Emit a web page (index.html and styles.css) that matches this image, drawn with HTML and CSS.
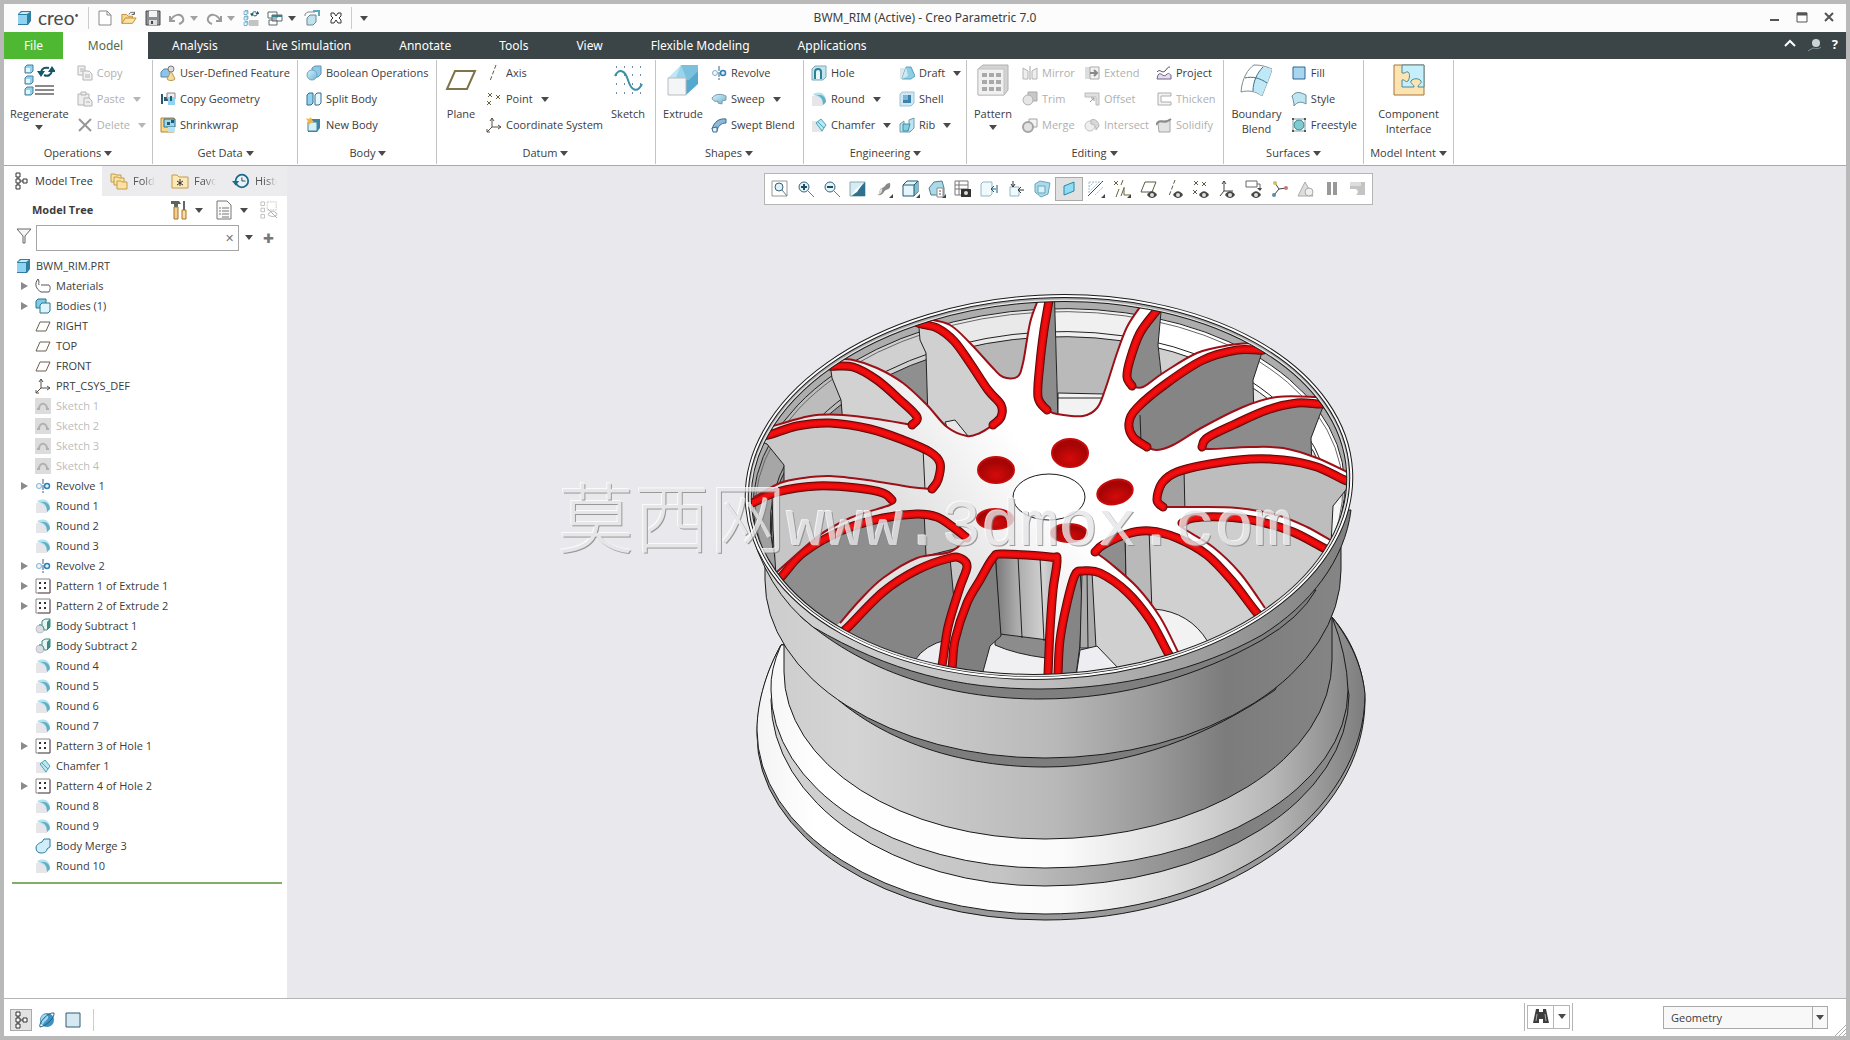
FILE: index.html
```html
<!DOCTYPE html>
<html lang="en">
<head>
<meta charset="utf-8">
<title>BWM_RIM (Active) - Creo Parametric 7.0</title>
<link rel="stylesheet" href="styles.css">
</head>
<body>
<svg class="defs" aria-hidden="true">
  <defs>
    <linearGradient id="gBlue" x1="0" y1="0" x2="1" y2="1"><stop offset="0" stop-color="#d8f1fb"/><stop offset="1" stop-color="#6fb6d3"/></linearGradient>
  </defs>
  <symbol id="cube" viewBox="0 0 16 16"><path d="M2 4l3-3h10v10l-3 4H2z" fill="#2f7fa3"/><path d="M2 5h9v9H2z" fill="#8fd3f0"/><path d="M3 4l3-2h8l-3 2z" fill="#c9edfb"/></symbol>
  <symbol id="new" viewBox="0 0 16 16"><path d="M2 1h8l4 4v10H2z" fill="#fff" stroke="#8a8a8a"/><path d="M10 1v4h4" fill="none" stroke="#8a8a8a"/></symbol>
  <symbol id="open" viewBox="0 0 18 16"><path d="M1 14V4h5l2 2h5v3" fill="#f7d78b" stroke="#b8862f"/><path d="M1 14l4-6h12l-4 6z" fill="#fbe3a4" stroke="#b8862f"/><path d="M9 4c1-3 5-3 6-1m0-2v3h-3" fill="none" stroke="#444"/></symbol>
  <symbol id="save" viewBox="0 0 16 16"><path d="M1 1h14v14H1z" fill="#8a8f94" stroke="#4a4a4a"/><path d="M4 1h8v6H4z" fill="#f3f3f3"/><path d="M4 10h8v5H4z" fill="#ddd"/><path d="M6 11h2v3H6z" fill="#444"/></symbol>
  <symbol id="undo" viewBox="0 0 16 16"><path d="M1 6v5h5M2 10c3-6 10-7 12-2 1 3-1 5-4 6" fill="none" stroke="#9b9b9b" stroke-width="2"/></symbol>
  <symbol id="redo" viewBox="0 0 16 16"><path d="M15 6v5h-5M14 10C11 4 4 3 2 8c-1 3 1 5 4 6" fill="none" stroke="#9b9b9b" stroke-width="2"/></symbol>
  <symbol id="regen" viewBox="0 0 32 32"><g fill="#8fd3f0" stroke="#4a7f96"><path d="M2 3l2-2h6v6l-2 2H2z"/><path d="M2 14l2-2h6v6l-2 2H2z"/><path d="M2 25l2-2h6v6l-2 2H2z"/></g><path d="M3 4h4v4H3zM3 15h4v4H3zM3 26h4v4H3z" fill="#e4f6fd"/><path d="M12 22h19M12 26h19M12 30h19" stroke="#8a8a8a" stroke-width="2"/><path d="M18 8c1-4 4-5 8-4M29 7c-1 4-4 6-8 4" fill="none" stroke="#175568" stroke-width="2"/><path d="M14 7h8l-4 6zM33 8h-8l4-6z" fill="#175568"/></symbol>
  <symbol id="wins" viewBox="0 0 16 16"><g fill="#fff" stroke="#5a6a70"><path d="M1 2h9v6H1zM5 5h10v6H5zM2 10h8v5H2z"/></g><path d="M5 5h10v2H5z" fill="#39808f"/></symbol>
  <symbol id="closewin" viewBox="0 0 16 16"><path d="M3 8l3-3h6v7l-3 3H3z" fill="#bfe3ee" stroke="#6b8791"/><path d="M1 6V4l3-2h7" fill="none" stroke="#8a8a8a"/><path d="M9 1h6v5" fill="none" stroke="#5aa7bf" stroke-width="2"/></symbol>
  <symbol id="xbox" viewBox="0 0 16 16"><path d="M3 3h3l2 3 2-3h3v3l-2 2 2 2v3h-3l-2-3-2 3H3v-3l2-2-2-2z" fill="#fff" stroke="#333"/></symbol>
  <symbol id="copy" viewBox="0 0 16 16"><g fill="#f2f2f2" stroke="#b4b4b4"><path d="M1 1h7v9H1z"/><path d="M6 6h6l3 3v6H6z"/></g><path d="M3 4h4M3 6h3M8 10h5M8 12h5" stroke="#b4b4b4"/></symbol>
  <symbol id="paste" viewBox="0 0 16 16"><g fill="#eee" stroke="#b4b4b4"><path d="M1 3h11v11H1z"/><path d="M4 1h5v3H4z"/><path d="M7 7h5l3 3v5H7z"/></g><path d="M9 11h4" stroke="#b4b4b4"/></symbol>
  <symbol id="del" viewBox="0 0 16 16"><path d="M2 2l12 12M14 2L2 14" stroke="#979797" stroke-width="2"/></symbol>
  <symbol id="udf" viewBox="0 0 16 16"><path d="M1 7l3-3h6v8H1z" fill="#8fc4e8" stroke="#4f87ad"/><circle cx="11" cy="4" r="3" fill="#ddd" stroke="#777"/><path d="M7 14l4-8 4 8c-2 2-6 2-8 0z" fill="#f6dc9a" stroke="#b99650"/></symbol>
  <symbol id="copygeo" viewBox="0 0 16 16"><path d="M1 3h2v10H1zM4 6h4v4H4z" fill="#2a5a70"/><path d="M7 2h8v6H7z" fill="#eee" stroke="#888"/><path d="M8 6h7v8H8z" fill="#8fd3f0"/><path d="M10 5h2v5h-2z" fill="#2a5a70"/></symbol>
  <symbol id="shrink" viewBox="0 0 16 16"><path d="M1 1h13v14H1z" fill="#f7d78b" stroke="#b8862f"/><path d="M4 2h11v8H4z" fill="#9ed7ee" stroke="#2e6f86"/><path d="M7 5h3v3H7zM11 3h3v3h-3z" fill="#235a70"/><path d="M8 10h7v5H8z" fill="#b5e2f2"/></symbol>
  <symbol id="bool" viewBox="0 0 16 16"><path d="M6 3l3-2h6v8l-3 3H6z" fill="#8fc9e8" stroke="#5b93b5"/><circle cx="6" cy="10" r="5" fill="url(#gBlue)" stroke="#6ba6c5"/></symbol>
  <symbol id="split" viewBox="0 0 16 16"><g fill="#8fd3f0" stroke="#2f6f8d"><path d="M1 4l2-2h4v10l-2 2H1z"/><path d="M9 4l2-2h4v10l-2 2H9z" fill="#e8f7fd"/></g></symbol>
  <symbol id="newbody" viewBox="0 0 16 16"><path d="M2 5l3-3h9v9l-3 4H2z" fill="#3f84a5"/><path d="M2 5h9v9H2z" fill="#d6f0fa" stroke="#3f84a5"/><path d="M0 1l3 1 2-2 1 3 2 2-3 1-2 2-1-3z" fill="#f3b63f"/></symbol>
  <symbol id="planeB" viewBox="0 0 32 32"><path d="M10 7h20l-8 18H2z" fill="none" stroke="#7d7448" stroke-width="2"/></symbol>
  <symbol id="plane" viewBox="0 0 16 16"><path d="M5 4h10l-4 9H1z" fill="none" stroke="#6b5f50"/></symbol>
  <symbol id="axis" viewBox="0 0 16 16"><path d="M10 0L4 16" stroke="#5f5b40" stroke-dasharray="4 2"/></symbol>
  <symbol id="point" viewBox="0 0 16 16"><path d="M2 2l4 4M6 2L2 6M10 4l4 4M14 4l-4 4M1 10l4 4M5 10l-4 4" stroke="#6b6336"/></symbol>
  <symbol id="csys" viewBox="0 0 16 16"><path d="M6 1v9h9M6 10l-5 5M4 4l2-3 2 3M12 8l3 2-3 2M1 12v3h3" fill="none" stroke="#5b5148"/></symbol>
  <symbol id="sketchB" viewBox="0 0 32 32"><path d="M4 3h26M4 11h26M4 20h26M4 29h26" stroke="#6b8ea8" stroke-dasharray="1 7" stroke-width="2"/><path d="M3 12C7 4 13 6 16 16s9 14 14 4" fill="none" stroke="#3f8fa8" stroke-width="2"/></symbol>
  <symbol id="extrudeB" viewBox="0 0 32 32"><path d="M1 14L14 1h17L19 14z" fill="#bfe6f5"/><path d="M14 1h17v19L19 31V14z" fill="#55a9cc"/><path d="M14 1h17v6L22 16H8z" fill="#8ccce6" opacity=".7"/><path d="M1 14h18v17H1z" fill="#f4f5f7" stroke="#b9bcc0"/></symbol>
  <symbol id="revolve" viewBox="0 0 16 16"><circle cx="12" cy="8" r="2.500" fill="#dff0fb" stroke="#2d7fb8" stroke-width="1.500"/><circle cx="4" cy="8" r="2.500" fill="#eef7fc" stroke="#7fb0d0"/><path d="M8 1v14" stroke="#3f5f78" stroke-dasharray="5 1"/></symbol>
  <symbol id="sweep" viewBox="0 0 16 16"><path d="M1 7c4-5 10-4 14-2v4l-4 1v3L7 12v-2c-3 1-5 0-6-3z" fill="url(#gBlue)" stroke="#7a98a8"/></symbol>
  <symbol id="swept" viewBox="0 0 16 16"><path d="M1 12C3 5 8 1 15 2v4C10 6 7 9 6 14z" fill="#8fb9d8" stroke="#3d6d92"/><path d="M1 11l5-1v5H2z" fill="#e8f4fb" stroke="#3d6d92"/></symbol>
  <symbol id="hole" viewBox="0 0 16 16"><path d="M1 4l3-3h11v11l-3 3H1z" fill="#c3e4ef" stroke="#7fa9b8"/><path d="M4 14V7c0-4 6-4 6 0v7" fill="#e9f7fb" stroke="#2f7f93" stroke-width="2"/></symbol>
  <symbol id="round" viewBox="0 0 16 16"><path d="M1 5h7l4 4v6H1z" fill="#e6e6ea"/><path d="M2 4c2-3 7-3 10-1 3 3 3 5 3 8l-3 3c0-6-3-8-10-10z" fill="#b4e1ec"/><path d="M5 4c5 1 7 4 7 10l3-3c0-4-3-7-6-7z" fill="#62b0c6"/></symbol>
  <symbol id="chamfer" viewBox="0 0 16 16"><path d="M1 4h7l4 5v6H1z" fill="#e6e6ea"/><path d="M5 6l5-4 5 6-4 6z" fill="#b9e8f0" stroke="#4aa3b8"/><path d="M7 5l6 6" stroke="#4aa3b8"/></symbol>
  <symbol id="draft" viewBox="0 0 16 16"><path d="M1 3h6l-3 11H1z" fill="#dfe6ea"/><path d="M7 2h5l4 9-4 3H3z" fill="#8fcde2" stroke="#5aa0b8"/><path d="M7 2l2 9-6 3z" fill="#c9eaf4"/></symbol>
  <symbol id="shell" viewBox="0 0 16 16"><path d="M1 3l2-2h12v11l-3 3H1z" fill="#cfe7f3" stroke="#9cc3d8"/><path d="M4 4h8v8H4z" fill="#3f81ab"/><path d="M4 4h5v5H4z" fill="#7db6d6"/></symbol>
  <symbol id="rib" viewBox="0 0 16 16"><path d="M1 15V7l4-3v5h5V3l5-2v10l-4 4z" fill="#bfe3ee" stroke="#6a9fb2"/><path d="M4 7h7l-2 7H4z" fill="#86cfe0" stroke="#3f8ea5"/></symbol>
  <symbol id="patternB" viewBox="0 0 32 32"><path d="M1 5l5-4h25v25l-4 5H1z" fill="#d3d3d3" stroke="#b1b1b1"/><path d="M1 5h26v26H1z" fill="#f0f0f0" stroke="#c2c2c2"/><path d="M5 9h5v4H5zM12 9h5v4h-5zM19 9h5v4h-5zM5 16h5v4H5zM12 16h5v4h-5zM19 16h5v4h-5zM5 23h5v4H5zM12 23h5v4h-5zM19 23h5v4h-5z" fill="#a9a9a9"/></symbol>
  <symbol id="mirror" viewBox="0 0 16 16"><path d="M1 3l5 3v8H1zM15 3l-5 3v8h5z" fill="#eee" stroke="#b4b4b4"/><path d="M8 1v14" stroke="#a5a5a5"/></symbol>
  <symbol id="trim" viewBox="0 0 16 16"><path d="M6 1h9v9H6z" fill="#c8c8c8" stroke="#a9a9a9"/><circle cx="6" cy="9" r="5" fill="#e6e6e6" stroke="#b0b0b0"/></symbol>
  <symbol id="merge" viewBox="0 0 16 16"><path d="M7 2h8v8H7z" fill="#f4f4f4" stroke="#a4a4a4"/><circle cx="6" cy="10" r="5" fill="#e2e2e2" stroke="#a4a4a4" stroke-width="2"/></symbol>
  <symbol id="extend" viewBox="0 0 16 16"><path d="M1 2h5v12H1z" fill="#ddd"/><path d="M6 2h9v12H6z" fill="#f2f2f2" stroke="#aaa"/><path d="M6 8h6M10 5l3 3-3 3" fill="none" stroke="#888" stroke-width="2"/></symbol>
  <symbol id="offset" viewBox="0 0 16 16"><path d="M1 2h14v12h-3V6H1z" fill="#e0e0e0" stroke="#bbb"/><path d="M6 11l4-4M7 7h3v3" stroke="#999" fill="none"/></symbol>
  <symbol id="intersect" viewBox="0 0 16 16"><circle cx="6" cy="9" r="5" fill="#eee" stroke="#c2c2c2"/><path d="M7 3c5-2 8 3 8 6l-3 4c0-4-2-6-5-6z" fill="#d8d8d8" stroke="#b5b5b5"/></symbol>
  <symbol id="project" viewBox="0 0 16 16"><path d="M2 10c3-4 5 3 8 0s3-1 5 0v4H1z" fill="#e4dfec" stroke="#75618c"/><path d="M1 7c3-4 5 2 8-1s2-4 5-4" fill="none" stroke="#555"/></symbol>
  <symbol id="thicken" viewBox="0 0 16 16"><path d="M15 2H2v12h13v-3H5V5h10z" fill="#f3f3f3" stroke="#adadad"/></symbol>
  <symbol id="solidify" viewBox="0 0 16 16"><path d="M2 6c4-4 6 3 12-3v12H3z" fill="#e3e3e3" stroke="#a5a5a5"/><path d="M0 8c4-8 7 0 15-6" fill="none" stroke="#8b8b8b" stroke-width="2"/></symbol>
  <symbol id="boundB" viewBox="0 0 32 32"><path d="M1 28C2 14 8 5 14 1c8 0 13 2 18 4-2 8-6 16-10 27C16 27 8 26 1 28z" fill="#fff" stroke="#7c8b92"/><path d="M23 3l9 2c-2 8-6 16-10 27-3-3-6-4-9-5 0-9 4-17 10-24z" fill="#bfe9f7"/><path d="M13 27C13 18 17 9 23 3M5 14c7-2 15 0 22 5" fill="none" stroke="#3f7285"/></symbol>
  <symbol id="fill" viewBox="0 0 16 16"><path d="M2 2h12v12H2z" fill="#a8d6f0" stroke="#2f6792"/></symbol>
  <symbol id="style" viewBox="0 0 16 16"><path d="M1 5c4-5 8-4 14-1v9c-5-3-9-2-12 2C3 11 2 8 1 5z" fill="#bfe6f0" stroke="#6b8e98"/></symbol>
  <symbol id="free" viewBox="0 0 16 16"><circle cx="8" cy="8" r="5" fill="#7fcbd2" stroke="#38828a"/><path d="M2 2h12v12H2z" fill="none" stroke="#8c9a9e"/><path d="M1 1h2v2H1zM13 1h2v2h-2zM1 13h2v2H1zM13 13h2v2h-2z" fill="#4b5a60"/></symbol>
  <symbol id="compB" viewBox="0 0 32 32"><path d="M1 1h30v30H1z" fill="#fbe4b2" stroke="#a8743a"/><path d="M9 1h22v22h-6c0-3 4-3 3-6-2-3-8-3-10 0-1 3 3 3 3 6H9v-7c3-1 3 3 6 1 2-3 2-8 0-9-2-1-3 2-6 1z" fill="#c5f0fb" stroke="#4e8797"/></symbol>
  <symbol id="treeic" viewBox="0 0 16 18"><path d="M3 1h4v4H3zM3 7h4v4H3zM3 13h4v4H3zM10 7h4v4h-4z" fill="#fff" stroke="#333"/><path d="M5 5v2M5 11v2M7 9h3" stroke="#333"/></symbol>
  <symbol id="folders" viewBox="0 0 18 18"><g fill="#fbe3a4" stroke="#c79a4b"><path d="M1 2h4l1 1h5v7H1z"/><path d="M4 5h4l1 1h5v7H4z"/><path d="M7 9h4l1 1h5v7H7z"/></g></symbol>
  <symbol id="fav" viewBox="0 0 18 18"><path d="M1 3h5l2 2h9v11H1z" fill="#fbe9b8" stroke="#c79a4b"/><path d="M9 7v7M6 9l6 4M12 9l-6 4" stroke="#333"/></symbol>
  <symbol id="hist" viewBox="0 0 20 18"><circle cx="11" cy="9" r="7" fill="#e7f3f8" stroke="#1c6a8d" stroke-width="2"/><path d="M11 5v4h4" fill="none" stroke="#333"/><path d="M0 9h8L4 14z" fill="#1c6a8d"/></symbol>
  <symbol id="tools" viewBox="0 0 16 20"><path d="M0 1h8l2 3H7v3H3V4H0z" fill="#5f6265"/><path d="M3 7h4v12H3z" fill="#f3cd8e" stroke="#a87424"/><path d="M12 1h2v9h-2z" fill="#666"/><path d="M11 10h4v9h-4z" fill="#f6dca8" stroke="#a87424"/></symbol>
  <symbol id="list" viewBox="0 0 16 20"><path d="M1 1h10l4 4v14H1z" fill="#fafafa" stroke="#777"/><path d="M3 8h2M3 11h2M3 14h2M6 8h7M6 11h7M6 14h7M6 17h7" stroke="#777"/></symbol>
  <symbol id="hidet" viewBox="0 0 20 20"><path d="M1 1h4v4H1zM1 8h4v4H1zM1 15h4v4H1z" fill="none" stroke="#bdbdbd"/><path d="M8 1h10v9H8z" fill="none" stroke="#c5c5c5" stroke-dasharray="2 1"/><path d="M9 15c3-5 7-5 10 0-3 3-7 3-10 0zM9 9l10 10" fill="none" stroke="#aaa"/></symbol>
  <symbol id="funnel" viewBox="0 0 16 16"><path d="M1 1h14L9 8v7H7V8z" fill="#f6f6f6" stroke="#666"/></symbol>
  <symbol id="mats" viewBox="0 0 16 16"><path d="M3 1c-4 5-2 10 3 13M3 1c2 3 0 4 1 6M6 7h8c2 2 1 5 0 7H6" fill="none" stroke="#555"/></symbol>
  <symbol id="bodies" viewBox="0 0 16 16"><path d="M1 3l2-2h8v9H1z" fill="#7fcbe6" stroke="#2c7390"/><path d="M5 7l2-2h8v8l-2 2H5z" fill="#dff4fb" stroke="#2c7390"/></symbol>
  <symbol id="sk" viewBox="0 0 16 16"><path d="M0 0h16v16H0z" fill="#dcdcdc"/><path d="M2 11h2c0-7 8-7 8 0h2" fill="none" stroke="#b0b0b0" stroke-width="2"/></symbol>
  <symbol id="pat" viewBox="0 0 16 16"><path d="M1 1h14v14H1z" fill="#fff" stroke="#8a8585"/><path d="M15 2v13H3" fill="none" stroke="#75606a"/><path d="M4 4h2v2H4zM9 4h2v2H9zM4 9h2v2H4zM9 9h2v2H9z" fill="#333"/></symbol>
  <symbol id="bsub" viewBox="0 0 16 16"><path d="M7 3l3-2h5v8l-3 3H7z" fill="#e5f5f3" stroke="#3c8a80"/><path d="M12 4l3-3v8l-3 3z" fill="#3c8a80"/><circle cx="5" cy="11" r="4" fill="#dcdce2" stroke="#c2c2ca"/><path d="M4 7c3-1 5 2 5 5" fill="none" stroke="#3c8a80"/></symbol>
  <symbol id="bmerge" viewBox="0 0 16 16"><path d="M7 4l2-3h6v8l-3 2c0 3-3 4-6 4s-5-2-5-5 3-5 6-6z" fill="#cfeef7" stroke="#2a7ba0"/></symbol>
  <symbol id="zfit" viewBox="0 0 18 18"><path d="M1 1h15v15H1z" fill="#fff" stroke="#999"/><circle cx="8" cy="7" r="4" fill="#dff1f8" stroke="#3a5f70"/><path d="M11 10l5 6" stroke="#5a7f90"/></symbol>
  <symbol id="zin" viewBox="0 0 18 18"><circle cx="7" cy="7" r="5" fill="#e4f3f8" stroke="#3a6478"/><path d="M11 11l6 6" stroke="#777"/><path d="M4 7h6M7 4v6" stroke="#17506b" stroke-width="2"/></symbol>
  <symbol id="zout" viewBox="0 0 18 18"><circle cx="7" cy="7" r="5" fill="#e4f3f8" stroke="#3a6478"/><path d="M11 11l6 6" stroke="#777"/><path d="M4 7h6" stroke="#17506b" stroke-width="2"/></symbol>
  <symbol id="repaint" viewBox="0 0 18 18"><path d="M1 2h15v14H1z" fill="#d3ecf6" stroke="#8aa"/><path d="M16 2v14H3z" fill="#2f708f"/><path d="M3 15l3-5 8-7-6 9z" fill="#fff"/></symbol>
  <symbol id="render" viewBox="0 0 18 18"><path d="M2 15c4 0 1-6 5-7s3-5 8-5c1 5-1 6-4 7s-2 6-9 5z" fill="#888"/><path d="M2 15c4 0 1-6 5-7 1 3-1 7-5 7z" fill="#ddd"/><path d="M18 14v4h-4z" fill="#444"/></symbol>
  <symbol id="disp" viewBox="0 0 18 18"><path d="M1 5l4-4h11v11l-4 4H1z" fill="#e4f6fb" stroke="#1f5a70"/><path d="M12 5l4-4v11l-4 4z" fill="#7fbcd2"/><path d="M1 5h11v11M12 5l4-4" fill="none" stroke="#1f5a70"/><path d="M18 14v4h-4z" fill="#444"/></symbol>
  <symbol id="orient" viewBox="0 0 18 18"><path d="M1 8l5-6 8-1 2 7v7H3z" fill="#a9dbea" stroke="#5a7a88"/><path d="M9 8h6v9H9z" fill="#fff" stroke="#888"/><path d="M11 11h2M11 14h2" stroke="#555"/><path d="M18 14v4h-4z" fill="#444"/></symbol>
  <symbol id="views" viewBox="0 0 18 18"><path d="M1 1h13v14H1zM1 5h13M1 9h13M5 1v14" fill="#fff" stroke="#777"/><path d="M7 9h10v8H7z" fill="#333"/><circle cx="12" cy="13" r="2" fill="#ddd"/></symbol>
  <symbol id="sect" viewBox="0 0 18 18"><path d="M1 4l2-2h9v12l-2 2H1z" fill="#f0f9fc" stroke="#8fb9c8"/><path d="M17 5v8M11 9h5M14 6l-3 3 3 3" fill="none" stroke="#1f5a70"/></symbol>
  <symbol id="sect2" viewBox="0 0 18 18"><path d="M3 7h9v9H3z" fill="#f0f9fc" stroke="#8fb9c8"/><path d="M6 1v6M4 4l2 3 2-3M17 10h-5M14 7l-3 3 3 3" fill="none" stroke="#333"/></symbol>
  <symbol id="persp" viewBox="0 0 18 18"><path d="M2 4l5-3 10 2-2 11-7 3-6-5z" fill="#a9dbea" stroke="#6aa5ba"/><path d="M5 6h7v7H5z" fill="#d8f0f8" stroke="#6aa5ba"/></symbol>
  <symbol id="planes3" viewBox="0 0 18 18"><path d="M4 6l10-4v9L4 15z" fill="#8fdcf5" stroke="#2a87a8"/></symbol>
  <symbol id="hatch" viewBox="0 0 18 18"><path d="M1 16L16 1" stroke="#444"/><path d="M2 2h13M2 2v12M2 7l5-5M2 12L12 2M8 15l8-8" stroke="#9fc3cf" fill="none" stroke-dasharray="2 1"/><path d="M18 14v4h-4z" fill="#444"/></symbol>
  <symbol id="datums" viewBox="0 0 18 18"><path d="M1 1l4 4M5 1L1 5M10 0L8 5M6 9l-3 8M11 7v8h6M11 8l-3 8" stroke="#6b6336" fill="none"/><path d="M18 14v4h-4z" fill="#444"/></symbol>
  <symbol id="eye" viewBox="0 0 10 7"><path d="M0 4c3-5 7-5 10 0-3 4-7 4-10 0z" fill="#444"/><circle cx="5" cy="4" r="2" fill="#ddd"/></symbol>
  <symbol id="dplane" viewBox="0 0 18 18"><path d="M5 2h11l-4 10H1z" fill="none" stroke="#5f5b40"/><use href="#eye" x="7" y="11" width="10" height="7"/></symbol>
  <symbol id="daxis" viewBox="0 0 18 18"><path d="M9 0L3 16" stroke="#5f5b40" stroke-dasharray="4 2"/><use href="#eye" x="7" y="11" width="10" height="7"/></symbol>
  <symbol id="dpoint" viewBox="0 0 18 18"><path d="M2 1l4 4M6 1L2 5M10 2l4 4M14 2l-4 4M1 10l4 4M5 10l-4 4" stroke="#5f5b40"/><use href="#eye" x="7" y="11" width="10" height="7"/></symbol>
  <symbol id="dcsys" viewBox="0 0 18 18"><path d="M6 1v10h9M6 11l-4 5M4 4l2-3 2 3" fill="none" stroke="#444"/><use href="#eye" x="7" y="11" width="10" height="7"/></symbol>
  <symbol id="dnote" viewBox="0 0 18 18"><path d="M1 1h11v6H1zM12 4h3v5" fill="#fff" stroke="#666"/><path d="M12 8l3 3 2-3z" fill="#444"/><use href="#eye" x="6" y="11" width="10" height="7"/></symbol>
  <symbol id="spin" viewBox="0 0 18 18"><path d="M4 3l4 6 7-1M8 9l-5 6" stroke="#444" fill="none"/><circle cx="4" cy="3" r="2" fill="#c9c26a"/><circle cx="15" cy="8" r="2" fill="#c77"/><circle cx="3" cy="15" r="2" fill="#588fa3"/></symbol>
  <symbol id="simg" viewBox="0 0 18 18"><path d="M8 2l8 14H1z" fill="#ddd" stroke="#aaa"/><circle cx="12" cy="12" r="4" fill="#eee" stroke="#aaa"/></symbol>
  <symbol id="pause" viewBox="0 0 18 18"><path d="M4 2h4v13H4zM10 2h4v13h-4z" fill="#999"/></symbol>
  <symbol id="stop" viewBox="0 0 18 18"><path d="M1 2h15v13H7c3-2 2-6-1-6H1z" fill="#c4c4c4"/><path d="M1 2h11v4H1z" fill="#ddd"/></symbol>
  <symbol id="globe" viewBox="0 0 18 18"><circle cx="9" cy="9" r="7" fill="#3a93c4"/><path d="M5 4c3-2 6 0 5 3s-4 3-5 7c-3-3-3-8 0-10z" fill="#9fd6ef"/><path d="M2 16C0 12 10 1 16 2c1 4-7 13-14 14z" fill="none" stroke="#2c5c77"/></symbol>
  <symbol id="pane" viewBox="0 0 18 18"><path d="M2 2h14v14H2z" fill="#d5e9f2" stroke="#335a70"/></symbol>
  <symbol id="bino" viewBox="0 0 18 18"><path d="M4 1h3v3h4V1h3l3 14h-6v-4H7v4H1z" fill="#3c3c3c"/><path d="M5 6l-1 7M13 6l1 7" stroke="#aaa"/></symbol>
</svg>

<header class="title-bar">
  <div class="quick">
    <svg class="i16"><use href="#cube"/></svg><span class="brand">creo<sup>•</sup></span><span class="vsep"></span>
    <button aria-label="New"><svg class="i16"><use href="#new"/></svg></button>
    <button aria-label="Open"><svg class="i16"><use href="#open"/></svg></button>
    <button aria-label="Save"><svg class="i16"><use href="#save"/></svg></button>
    <button aria-label="Undo" class="drop off"><svg class="i16"><use href="#undo"/></svg></button>
    <button aria-label="Redo" class="drop off"><svg class="i16"><use href="#redo"/></svg></button>
    <button aria-label="Regenerate"><svg class="i16"><use href="#regen"/></svg></button>
    <button aria-label="Windows" class="drop"><svg class="i16"><use href="#wins"/></svg></button>
    <button aria-label="Activate"><svg class="i16"><use href="#closewin"/></svg></button>
    <button aria-label="Close"><svg class="i16"><use href="#xbox"/></svg></button>
    <button aria-label="Customize" class="drop custom"></button>
  </div>
  <h1>BWM_RIM (Active) - Creo Parametric 7.0</h1>
  <div class="win">
    <button aria-label="Minimize"><svg class="i12" viewBox="0 0 12 12"><path d="M1 8h9" stroke="#555" stroke-width="2"/></svg></button>
    <button aria-label="Restore"><svg class="i12" viewBox="0 0 12 12"><path d="M1 1h10v9H1z" fill="#fff" stroke="#555"/><path d="M1 2h10" stroke="#555" stroke-width="3"/></svg></button>
    <button aria-label="Close window"><svg class="i12" viewBox="0 0 12 12"><path d="M2 1l8 8M10 1L2 9" stroke="#555" stroke-width="2"/></svg></button>
  </div>
</header>

<nav class="tabs">
  <a href="#file" class="file">File</a><a href="#model" class="on">Model</a>
  <a href="#analysis">Analysis</a><a href="#live">Live Simulation</a><a href="#annotate">Annotate</a><a href="#tools">Tools</a><a href="#view">View</a><a href="#flex">Flexible Modeling</a><a href="#apps">Applications</a>
  <div class="help">
    <button aria-label="Collapse ribbon"><svg class="i12" viewBox="0 0 12 12"><path d="M1 8l5-5 5 5" fill="none" stroke="#fff" stroke-width="2"/></svg></button>
    <button aria-label="Search"><svg class="i16" viewBox="0 0 16 16"><circle cx="10" cy="7" r="4" fill="#c9d6d9"/><path d="M2 15l5-3c3 1 6 1 8-1" fill="none" stroke="#7d9298" stroke-width="1"/></svg></button>
    <button aria-label="Help" class="q">?</button>
  </div>
</nav>

<section class="ribbon" aria-label="Ribbon">
  <div class="group g-ops"><div class="tools">
    <button class="big drop"><svg><use href="#regen"/></svg><span>Regenerate</span></button>
    <div class="col"><button disabled><svg><use href="#copy"/></svg>Copy</button><button class="drop" disabled><svg><use href="#paste"/></svg>Paste</button><button class="drop" disabled><svg><use href="#del"/></svg>Delete</button></div>
  </div><button class="name drop">Operations</button></div>
  <div class="group g-get"><div class="tools">
    <div class="col"><button><svg><use href="#udf"/></svg>User-Defined Feature</button><button><svg><use href="#copygeo"/></svg>Copy Geometry</button><button><svg><use href="#shrink"/></svg>Shrinkwrap</button></div>
  </div><button class="name drop">Get Data</button></div>
  <div class="group g-body"><div class="tools">
    <div class="col"><button><svg><use href="#bool"/></svg>Boolean Operations</button><button><svg><use href="#split"/></svg>Split Body</button><button><svg><use href="#newbody"/></svg>New Body</button></div>
  </div><button class="name drop">Body</button></div>
  <div class="group g-datum"><div class="tools">
    <button class="big"><svg><use href="#planeB"/></svg><span>Plane</span></button>
    <div class="col"><button><svg><use href="#axis"/></svg>Axis</button><button class="drop"><svg><use href="#point"/></svg>Point</button><button><svg><use href="#csys"/></svg>Coordinate System</button></div>
    <button class="big"><svg><use href="#sketchB"/></svg><span>Sketch</span></button>
  </div><button class="name drop">Datum</button></div>
  <div class="group g-shapes"><div class="tools">
    <button class="big"><svg><use href="#extrudeB"/></svg><span>Extrude</span></button>
    <div class="col"><button><svg><use href="#revolve"/></svg>Revolve</button><button class="drop"><svg><use href="#sweep"/></svg>Sweep</button><button><svg><use href="#swept"/></svg>Swept Blend</button></div>
  </div><button class="name drop">Shapes</button></div>
  <div class="group g-eng"><div class="tools">
    <div class="col"><button><svg><use href="#hole"/></svg>Hole</button><button class="drop"><svg><use href="#round"/></svg>Round</button><button class="drop"><svg><use href="#chamfer"/></svg>Chamfer</button></div>
    <div class="col"><button class="drop"><svg><use href="#draft"/></svg>Draft</button><button><svg><use href="#shell"/></svg>Shell</button><button class="drop"><svg><use href="#rib"/></svg>Rib</button></div>
  </div><button class="name drop">Engineering</button></div>
  <div class="group g-edit"><div class="tools">
    <button class="big drop"><svg><use href="#patternB"/></svg><span>Pattern</span></button>
    <div class="col"><button disabled><svg><use href="#mirror"/></svg>Mirror</button><button disabled><svg><use href="#trim"/></svg>Trim</button><button disabled><svg><use href="#merge"/></svg>Merge</button></div>
    <div class="col"><button disabled><svg><use href="#extend"/></svg>Extend</button><button disabled><svg><use href="#offset"/></svg>Offset</button><button disabled><svg><use href="#intersect"/></svg>Intersect</button></div>
    <div class="col"><button><svg><use href="#project"/></svg>Project</button><button disabled><svg><use href="#thicken"/></svg>Thicken</button><button disabled><svg><use href="#solidify"/></svg>Solidify</button></div>
  </div><button class="name drop">Editing</button></div>
  <div class="group g-surf"><div class="tools">
    <button class="big"><svg><use href="#boundB"/></svg><span>Boundary<br>Blend</span></button>
    <div class="col"><button><svg><use href="#fill"/></svg>Fill</button><button><svg><use href="#style"/></svg>Style</button><button><svg><use href="#free"/></svg>Freestyle</button></div>
  </div><button class="name drop">Surfaces</button></div>
  <div class="group g-intent"><div class="tools">
    <button class="big"><svg><use href="#compB"/></svg><span>Component<br>Interface</span></button>
  </div><button class="name drop">Model Intent</button></div>
</section>

<main class="work">
  <aside class="panel">
    <div class="ptabs">
      <button class="on"><svg><use href="#treeic"/></svg>Model Tree</button>
      <button><svg><use href="#folders"/></svg><span>Folder</span></button>
      <button><svg><use href="#fav"/></svg><span>Favorites</span></button>
      <button><svg><use href="#hist"/></svg><span>History</span></button>
    </div>
    <div class="phead"><h2>Model Tree</h2>
      <button class="drop" aria-label="Settings"><svg><use href="#tools"/></svg></button>
      <button class="drop" aria-label="Show"><svg><use href="#list"/></svg></button>
      <button aria-label="Hide columns"><svg><use href="#hidet"/></svg></button>
    </div>
    <div class="search">
      <label for="filter" aria-label="Filter tree"><svg class="i16"><use href="#funnel"/></svg></label>
      <div class="field"><input id="filter" type="text"><button aria-label="Clear">✕</button></div>
      <button class="drop" aria-label="Filter options"></button>
      <button class="plus" aria-label="Add">✚</button>
    </div>
    <ul class="tree">
      <li class="root"><svg><use href="#cube"/></svg>BWM_RIM.PRT</li>
      <li class="exp"><button aria-label="Expand"></button><svg><use href="#mats"/></svg>Materials</li>
      <li class="exp"><button aria-label="Expand"></button><svg><use href="#bodies"/></svg>Bodies (1)</li>
      <li><svg><use href="#plane"/></svg>RIGHT</li>
      <li><svg><use href="#plane"/></svg>TOP</li>
      <li><svg><use href="#plane"/></svg>FRONT</li>
      <li><svg><use href="#csys"/></svg>PRT_CSYS_DEF</li>
      <li class="dim"><svg><use href="#sk"/></svg>Sketch 1</li>
      <li class="dim"><svg><use href="#sk"/></svg>Sketch 2</li>
      <li class="dim"><svg><use href="#sk"/></svg>Sketch 3</li>
      <li class="dim"><svg><use href="#sk"/></svg>Sketch 4</li>
      <li class="exp"><button aria-label="Expand"></button><svg><use href="#revolve"/></svg>Revolve 1</li>
      <li><svg><use href="#round"/></svg>Round 1</li>
      <li><svg><use href="#round"/></svg>Round 2</li>
      <li><svg><use href="#round"/></svg>Round 3</li>
      <li class="exp"><button aria-label="Expand"></button><svg><use href="#revolve"/></svg>Revolve 2</li>
      <li class="exp"><button aria-label="Expand"></button><svg><use href="#pat"/></svg>Pattern 1 of Extrude 1</li>
      <li class="exp"><button aria-label="Expand"></button><svg><use href="#pat"/></svg>Pattern 2 of Extrude 2</li>
      <li><svg><use href="#bsub"/></svg>Body Subtract 1</li>
      <li><svg><use href="#bsub"/></svg>Body Subtract 2</li>
      <li><svg><use href="#round"/></svg>Round 4</li>
      <li><svg><use href="#round"/></svg>Round 5</li>
      <li><svg><use href="#round"/></svg>Round 6</li>
      <li><svg><use href="#round"/></svg>Round 7</li>
      <li class="exp"><button aria-label="Expand"></button><svg><use href="#pat"/></svg>Pattern 3 of Hole 1</li>
      <li><svg><use href="#chamfer"/></svg>Chamfer 1</li>
      <li class="exp"><button aria-label="Expand"></button><svg><use href="#pat"/></svg>Pattern 4 of Hole 2</li>
      <li><svg><use href="#round"/></svg>Round 8</li>
      <li><svg><use href="#round"/></svg>Round 9</li>
      <li><svg><use href="#bmerge"/></svg>Body Merge 3</li>
      <li><svg><use href="#round"/></svg>Round 10</li>
    </ul>
  </aside>

  <section class="viewport" aria-label="Graphics">
    <svg class="scene" viewBox="287 166 1559 832" role="img" aria-label="Wheel rim model">
      <defs>
        <linearGradient id="wall" gradientUnits="userSpaceOnUse" x1="765" y1="0" x2="1341" y2="0"><stop offset="0" stop-color="#cdcdcd"/><stop offset=".15" stop-color="#d4d4d4"/><stop offset=".5" stop-color="#b9b9b9"/><stop offset=".66" stop-color="#9c9c9c"/><stop offset=".8" stop-color="#7c7c7c"/><stop offset="1" stop-color="#858585"/></linearGradient>
        <linearGradient id="ringW" gradientUnits="userSpaceOnUse" x1="757" y1="0" x2="1365" y2="0"><stop offset="0" stop-color="#f4f4f4"/><stop offset=".1" stop-color="#fff"/><stop offset=".5" stop-color="#fbfbfb"/><stop offset=".68" stop-color="#dedede"/><stop offset=".85" stop-color="#b6b6b6"/><stop offset="1" stop-color="#7d7d7d"/></linearGradient>
        <linearGradient id="ringG" gradientUnits="userSpaceOnUse" x1="771" y1="0" x2="1349" y2="0"><stop offset="0" stop-color="#d2d2d2"/><stop offset=".4" stop-color="#c4c4c4"/><stop offset=".8" stop-color="#7f7f7f"/><stop offset="1" stop-color="#8c8c8c"/></linearGradient>
        <linearGradient id="lipG" gradientUnits="userSpaceOnUse" x1="748" y1="0" x2="1351" y2="0"><stop offset="0" stop-color="#d4d4d4"/><stop offset=".5" stop-color="#bdbdbd"/><stop offset="1" stop-color="#7f7f7f"/></linearGradient>
        <linearGradient id="cyl" gradientUnits="userSpaceOnUse" x1="995" y1="0" x2="1056" y2="0"><stop offset="0" stop-color="#777"/><stop offset=".35" stop-color="#aaa"/><stop offset=".8" stop-color="#d2d2d2"/><stop offset="1" stop-color="#b5b5b5"/></linearGradient>
        <linearGradient id="hub" gradientUnits="userSpaceOnUse" x1="930" y1="540" x2="1040" y2="470"><stop offset="0" stop-color="#e2e2e2"/><stop offset="1" stop-color="#fff"/></linearGradient>
        <radialGradient id="lug" cx=".5" cy=".7"><stop offset="0" stop-color="#d60a0a"/><stop offset="1" stop-color="#a50505"/></radialGradient>
        <clipPath id="rimClip"><ellipse cx="1049" cy="488" rx="299" ry="187" transform="rotate(-3 1049 488)"/></clipPath>
      </defs>
      <g stroke="#1a1a1a">
        <path fill="#9a9a9a" d="M781 645C768 668 757 700 757 735A288 185 0 0 0 1045 920A320 220 0 0 0 1365 700C1364 670 1352 640 1332 617z"/>
        <path fill="url(#ringW)" d="M781 645C768 668 757 700 757 730A288 184 0 0 0 1045 914A320 220 0 0 0 1365 694C1362 665 1350 640 1332 617z"/>
        <path fill="url(#ringG)" d="M781 645L771 700A274 186 0 0 0 1045 886A304 191 0 0 0 1349 695L1332 617z"/>
        <path fill="url(#ringW)" d="M781 645Q770 670 771 690A274 178 0 0 0 1045 868A303 178 0 0 0 1348 690Q1347 655 1332 617z"/>
        <path fill="url(#wall)" d="M784 645V672A261 167 0 0 0 1045 839A287 179 0 0 0 1332 660V617z"/>
        <path fill="#7d7d7d" d="M805 666C860 735 950 767 1045 767C1130 767 1210 735 1275 690L1290 660L1045 700z"/>
        <path fill="url(#wall)" d="M765 540V580A280 178 0 0 0 1045 758A296 188 0 0 0 1341 570V530z"/>
        <path fill="#7f7f7f" d="M800 616C870 678 960 699 1040 699C1125 699 1200 675 1262 640Q1300 618 1316 590L1040 640z"/>
        <path fill="url(#lipG)" d="M748 520Q765 590 813 627C890 672 960 689 1040 689C1120 689 1200 670 1262 635C1310 605 1345 560 1351 510z"/>
        <ellipse fill="#fff" cx="1049" cy="487" rx="304" ry="192" transform="rotate(-3 1049 487)"/>
        <ellipse fill="#a9a9a9" cx="1049" cy="487" rx="301" ry="189" transform="rotate(-3 1049 487)"/>
        <ellipse fill="url(#hub)" cx="1049" cy="488" rx="299" ry="187" transform="rotate(-3 1049 488)"/>
      </g>
      <g id="windows" clip-path="url(#rimClip)"></g>
      <g fill="none" stroke="#1a1a1a">
        <ellipse cx="1049" cy="488" rx="299" ry="187" transform="rotate(-3 1049 488)" stroke="#e6e6e6" stroke-width="2"/>
        <ellipse cx="1049" cy="488" rx="298" ry="186" transform="rotate(-3 1049 488)"/>
        <ellipse cx="1049" cy="497" rx="36" ry="23" fill="#fff"/>
      </g>
      <g fill="url(#lug)" stroke="#c80c0c" stroke-width="2">
        <ellipse cx="1070" cy="453" rx="18" ry="14"/><ellipse cx="996" cy="470" rx="18" ry="13"/>
        <ellipse cx="1115" cy="492" rx="18" ry="12" transform="rotate(-14 1115 492)"/>
        <ellipse cx="995" cy="519" rx="18" ry="10"/><ellipse cx="1069" cy="533" rx="18" ry="9"/>
      </g>
      <g class="mark"><text x="558" y="547" class="cjk">莫西网</text><text x="786" y="545" class="mono">www.3dmox.com</text></g>
    </svg>
    <div class="viewtools">
      <button aria-label="Refit"><svg><use href="#zfit"/></svg></button><button aria-label="Zoom in"><svg><use href="#zin"/></svg></button><button aria-label="Zoom out"><svg><use href="#zout"/></svg></button><button aria-label="Repaint"><svg><use href="#repaint"/></svg></button><button aria-label="Rendering"><svg><use href="#render"/></svg></button><button aria-label="Display style"><svg><use href="#disp"/></svg></button><button aria-label="Orientations"><svg><use href="#orient"/></svg></button><button aria-label="View manager"><svg><use href="#views"/></svg></button><button aria-label="Section"><svg><use href="#sect"/></svg></button><button aria-label="Section direction"><svg><use href="#sect2"/></svg></button><button aria-label="Perspective"><svg><use href="#persp"/></svg></button><button aria-label="Capping" class="on"><svg><use href="#planes3"/></svg></button><button aria-label="Hatching"><svg><use href="#hatch"/></svg></button><button aria-label="Datum filters"><svg><use href="#datums"/></svg></button><button aria-label="Plane display"><svg><use href="#dplane"/></svg></button><button aria-label="Axis display"><svg><use href="#daxis"/></svg></button><button aria-label="Point display"><svg><use href="#dpoint"/></svg></button><button aria-label="Csys display"><svg><use href="#dcsys"/></svg></button><button aria-label="Annotation display"><svg><use href="#dnote"/></svg></button><button aria-label="Spin center"><svg><use href="#spin"/></svg></button><button aria-label="Simulation"><svg><use href="#simg"/></svg></button><button aria-label="Pause"><svg><use href="#pause"/></svg></button><button aria-label="Stop"><svg><use href="#stop"/></svg></button>
    </div>
  </section>
</main>

<footer class="status">
  <button class="on" aria-label="Navigator"><svg><use href="#treeic"/></svg></button>
  <button aria-label="Browser"><svg><use href="#globe"/></svg></button>
  <button aria-label="Full screen"><svg><use href="#pane"/></svg></button>
  <span class="vsep"></span>
  <div class="find"><button aria-label="Find"><svg><use href="#bino"/></svg></button><button class="drop" aria-label="Find options"></button></div>
  <div class="sel"><select aria-label="Selection filter"><option>Geometry</option></select></div>
  <svg class="grip" viewBox="0 0 12 12"><path d="M1 12L12 1M5 12l7-7M9 12l3-3" stroke="#aaa"/></svg>
</footer>
<script src="wheel.js"></script>
</body>
</html>
```
FILE: styles.css
```css
* { box-sizing: border-box; }
html { height: 100%; }
body {
  margin: 0; min-height: 100%; display: flex; flex-direction: column;
  border: 4px solid #b9b9b9; background: #fff; color: #3c3c3c;
  font: 11px/16px "Open Sans", "Noto Sans", sans-serif;
}
.defs { position: absolute; width: 0; height: 0; }
button { font: inherit; color: inherit; border: 0; background: none; padding: 0; margin: 0; display: flex; align-items: center; }
svg { flex: none; }
.i16 { width: 16px; height: 16px; }
.i12 { width: 12px; height: 12px; }
.drop::after { content: ""; border: 4px solid transparent; border-top: 5px solid #4a4a4a; border-bottom: 0; }
.vsep { width: 1px; height: 22px; background: #ccc; }

.title-bar { height: 28px; display: grid; grid-template-columns: 1fr auto 1fr; align-items: center; background: #fcfcfc; }
.title-bar h1 { margin: 0; font: 12px/16px "Noto Sans", sans-serif; }
.quick { display: flex; align-items: center; gap: 8px; padding-left: 12px; }
.quick .drop { gap: 5px; }
.quick .custom { height: 22px; padding-left: 8px; margin-left: -1px; border-left: 1px solid #ccc; }
.brand { font: 19px/20px Lato, sans-serif; color: #4a4a4a; width: 42px; margin-left: -2px; }
.brand sup { font-size: 7px; line-height: 7px; vertical-align: 7px; }
.off::after { opacity: .5; }
.win { justify-self: end; display: flex; gap: 15px; padding-right: 11px; }

.tabs { height: 27px; display: flex; background: #3b4446; font: 12px/28px "Noto Sans", sans-serif; }
.tabs a { color: #fff; text-decoration: none; padding: 0 24px; white-space: nowrap; }
.tabs .file { width: 59px; padding: 0; text-align: center; background: #4fb833; }
.tabs .on { width: 85px; padding: 0; text-align: center; background: #fff; color: #4f6a4a; }
.help { margin-left: auto; display: flex; align-items: center; gap: 10px; padding: 0 8px 4px 0; color: #fff; }
.q { font-weight: 700; font-size: 13px; }

.ribbon { height: 107px; display: flex; border-bottom: 1px solid #a9a9a9; }
.group { display: flex; flex-direction: column; justify-content: space-between; border-right: 1px solid #c4c4c4; margin: 1px 0; padding: 0 6px; }
.tools { display: flex; gap: 8px; }
.col { display: flex; flex-direction: column; }
.col button { height: 26px; gap: 4px; white-space: nowrap; }
.col svg { width: 16px; height: 16px; }
.col .drop::after { margin-left: 4px; }
.col button:disabled { color: #b0b0b0; }
.col button:disabled::after { opacity: .4; }
.big { flex-direction: column; width: 60px; padding-top: 4px; gap: 1px; line-height: 15px; justify-content: flex-start; }
.big svg { width: 32px; height: 32px; margin-bottom: 9px; }
.big.drop::after { margin-top: 3px; }
.name { align-self: center; gap: 3px; height: 22px; white-space: nowrap; }
.g-ops { width: 149px; }
.g-get { width: 145px; padding-left: 7px; }
.g-body { width: 139px; padding-left: 8px; }
.g-datum { width: 219px; padding-left: 5px; }
.g-datum .tools, .g-shapes .tools { gap: 6px; }
.g-datum .big { width: 38px; }
.g-shapes { width: 148px; padding-left: 5px; }
.g-shapes .big { width: 44px; }
.g-eng { width: 163px; padding-left: 7px; }
.g-eng .col:first-child { width: 80px; }
.g-edit { width: 257px; padding-left: 5px; }
.g-edit .big { width: 42px; }
.g-edit .col { width: 54px; }
.g-edit .col:nth-child(3) { width: 64px; }
.g-surf { width: 140px; }
.g-surf .big { width: 54px; }
.g-intent { width: 90px; }
.g-intent .big { width: 78px; }

.work { flex: 1; display: flex; min-height: 0; }
.panel { width: 283px; background: #fff; }
.ptabs { height: 30px; display: flex; background: #ececee; }
.ptabs button { width: 61px; gap: 5px; padding-left: 8px; color: #555; }
.ptabs span { width: 22px; overflow: hidden; text-align: left; -webkit-mask-image: linear-gradient(90deg, #000 50%, transparent); mask-image: linear-gradient(90deg, #000 50%, transparent); }
.ptabs .on { width: 98px; background: #fff; color: #333; }
.ptabs svg { width: 18px; height: 18px; }
.phead { height: 28px; display: flex; align-items: center; gap: 12px; padding: 0 9px 0 28px; }
.phead h2 { flex: 1; margin: 0; font-size: 11px; font-weight: 700; }
.phead .drop { gap: 7px; }
.phead svg { width: 18px; height: 20px; }
.search { display: flex; align-items: center; gap: 4px; padding-left: 12px; height: 27px; }
.field { width: 203px; height: 26px; display: flex; border: 1px solid #a5a5a5; padding-right: 4px; }
.field input { flex: 1; min-width: 0; border: 0; outline: 0; font: inherit; background: none; }
.field button { color: #777; }
.search .drop { padding-left: 2px; }
.plus { color: #777; font-size: 13px; margin-left: 6px; }
.tree { list-style: none; margin: 5px 5px 0 8px; padding: 0 0 6px; border-bottom: 2px solid #7fae6b; }
.tree li { height: 20px; display: flex; align-items: center; gap: 5px; padding-left: 23px; }
.tree .root { padding-left: 3px; }
.tree .exp { padding-left: 9px; }
.tree svg { width: 16px; height: 16px; }
.tree button { width: 9px; }
.tree button::before { content: ""; border: 4px solid transparent; border-left: 7px solid #8a8a8a; border-right: 0; }
.dim { color: #bdbdbd; }

.viewport { flex: 1; min-width: 0; position: relative; background: #e8e8ed; display: flex; flex-direction: column; align-items: center; padding-left: 3px; }
.scene { position: absolute; inset: 0; width: 100%; height: 100%; }
.mark { fill: #e6e6e8; opacity: .8; filter: drop-shadow(1px 1px 0 #858585) drop-shadow(-1px -1px 0 #fff); }
.cjk { font: 300 76px "Noto Sans CJK SC", sans-serif; }
.mono { font: 65px "Liberation Mono", monospace; }
.viewtools { position: relative; margin-top: 7px; width: 609px; height: 32px; display: flex; align-items: center; background: #fff; border: 1px solid #b5b5b5; padding-left: 2px; }
.viewtools button { flex: 1; height: 24px; justify-content: center; }
.viewtools .on { background: #e1e1e1; border: 1px solid #aaa; }
.viewtools svg { width: 18px; height: 18px; }

.status { height: 38px; display: flex; align-items: center; gap: 4px; padding: 4px 0 0 6px; border-top: 1px solid #b5b5b5; background: #fff; }
.status > button { width: 22px; height: 22px; justify-content: center; }
.status > .on { background: #e3e3e3; border: 1px solid #aaa; }
.status svg { width: 18px; height: 18px; }
.status .vsep { margin-left: 5px; }
.find { margin: 0 0 6px auto; padding: 2px; border: 1px solid #b5b5b5; border-width: 0 1px; display: flex; }
.find button { height: 24px; width: 27px; justify-content: center; border: 1px solid #b5b5b5; }
.find .drop { width: 16px; border-left: 0; }
.sel { display: flex; align-items: center; margin: 0 2px 4px 86px; position: relative; }
.sel select { appearance: none; width: 165px; height: 23px; border: 1px solid #a9a9a9; border-radius: 0; background: #f8f8f8; font: inherit; color: inherit; padding: 0 7px; }
.sel::after { content: ""; position: absolute; right: 4px; border: 4px solid transparent; border-top: 5px solid #4a4a4a; border-bottom: 0; }
.sel::before { content: ""; position: absolute; right: 15px; height: 23px; border-left: 1px solid #a9a9a9; }
.status .grip { width: 12px; height: 12px; align-self: flex-end; }
```
FILE: wheel.js
```js
// Spoke openings of the rim. edge: the thick red fillet, lip: the thin far edge,
// see: where the barrel shows through [area, flange tone, barrel tone], parts: other surfaces in the opening.
const openings = [
  { fill: '#8c8c8c', edge: [[1049,300],[1044,330],[1040,363],[1038,397],[1047,410]], lip: [[1057,414],[1083,416],[1097,408],[1105,390],[1117,353],[1127,327],[1140,307]],
    see: ['1054,280 1150,280 1150,420 1058,420', '#f0f0f0', '#bababa'], parts: [['#f2f2f2','1058,393 1104,394 1104,420 1058,420'],['none','1058,398 1104,398']] },
  { fill: '#8a8a8a', edge: [[1157,310],[1140,333],[1130,360],[1127,377],[1132,386]], lip: [[1143,387],[1163,373],[1197,353],[1230,345],[1253,343]],
    see: ['1163,290 1158,345 1163,390 1290,390 1290,290', '#ffffff', '#cfcfcf'], parts: [] },
  { fill: '#858585', edge: [[1263,350],[1237,350],[1203,360],[1167,383],[1137,408],[1129,423],[1133,437],[1147,447]], lip: [[1157,450],[1173,445],[1203,427],[1243,407],[1277,397],[1317,397]],
    see: ['1266,340 1253,380 1254,420 1360,420 1330,330', '#ffffff', '#e6e6e6'], parts: [['none','1140,415 1141,442']] },
  { fill: '#8c8c8c', edge: [[1322,404],[1297,403],[1267,410],[1233,425],[1207,438],[1202,447]], lip: [[1210,449],[1250,447],[1283,448],[1317,458],[1347,472]],
    see: ['1324,404 1311,438 1312,470 1380,480 1360,400', '#ffffff', '#e6e6e6'], parts: [] },
  { fill: '#bdbdbd', edge: [[1347,481],[1317,467],[1283,460],[1250,459],[1210,464],[1177,472],[1162,483],[1157,500],[1163,507]], lip: [[1197,507],[1237,508],[1277,515],[1307,527],[1330,540]],
    see: ['1349,486 1333,506 1331,545 1380,540 1380,480', '#f6f6f6', '#d4d4d4'], parts: [['#a2a2a2','1150,520 1165,485 1184,468 1185,515']] },
  { fill: '#cecece', edge: [[1326,549],[1293,532],[1257,521],[1223,517],[1193,518],[1182,523]], lip: [[1183,528],[1213,547],[1240,573],[1265,608]], parts: [] },
  { fill: '#d0d0d0', edge: [[1257,613],[1233,582],[1207,555],[1177,538],[1150,531],[1127,534],[1103,545],[1095,552]], lip: [[1110,563],[1137,587],[1160,617],[1178,652]],
    parts: [['#8e8e8e','1090,550 1125,530 1126,582'],['#b9b9b9','1125,528 1149,528 1152,612 1126,582'],['#f2f2f2','1154,609 Q1190,612 1208,642 L1180,660']] },
  { fill: '#d0d0d0', edge: [[1168,653],[1150,620],[1127,592],[1100,573],[1083,571],[1075,575],[1067,603],[1060,640],[1058,675]], lip: [],
    parts: [['#858585','1070,575 1080,570 1082,600 1080,645 1074,690 1050,690'],['#aaa','1082,572 1092,572 1096,648 1080,648'],['none','1087,572 1088,648'],['#eeeef2','1080,650 1097,646 1120,670 1090,690 1074,690']] },
  { fill: '#f0f0f3', edge: [[1048,675],[1050,630],[1053,590],[1057,560],[1050,557],[1003,554],[993,558],[980,580],[967,603],[955,640],[952,667]], lip: [],
    parts: [['#8c8c8c','995,632 1046,638 1046,658 Q1015,654 995,645'],['url(#cyl)','995,550 1060,555 1048,640 1000,634'],['#7f7f7f','950,680 955,640 967,600 995,552 1001,636 990,646 978,690'],['none','1018,556 1022,638'],['none','1040,557 1044,641']] },
  { fill: '#858585', edge: [[942,665],[948,627],[960,587],[967,567],[962,559],[950,558],[917,570],[883,592],[847,628]], lip: [],
    parts: [['#c4c4c4','950,558 970,558 954,600'],['#eeeef2','915,660 Q925,645 946,640 L942,680']] },
  { fill: '#8e8e8e', edge: [[780,578],[803,553],[843,530],[883,518],[917,514],[937,517],[953,527],[967,538]], lip: [[950,552],[917,558],[883,578],[860,600],[840,623]],
    parts: [['#c0c0c0','924,510 970,530 970,545 926,556']] },
  { fill: '#c6c6c6', edge: [[752,503],[777,492],[817,486],[857,488],[883,493],[892,500]], lip: [[890,505],[850,518],[817,537],[777,572]],
    see: ['730,500 772,494 773,530 776,575 730,560', '#a0a0a0', '#8c8c8c'], parts: [] },
  { fill: '#c9c9c9', edge: [[768,435],[797,426],[830,423],[870,429],[903,440],[930,452],[940,463],[938,480],[932,489]], lip: [[910,487],[867,480],[830,476],[803,478],[780,483],[753,498]],
    see: ['730,430 767,444 784,465 784,490 730,510', '#a6a6a6', '#8a8a8a'], parts: [['#d8d8d8','923,448 945,460 940,495 925,490']] },
  { fill: '#d2d2d2', edge: [[830,366],[853,367],[877,380],[900,400],[917,417],[912,425]], lip: [[883,420],[843,415],[810,416],[770,427]],
    see: ['828,350 832,378 841,400 843,425 740,440 760,380', '#bcbcbc', '#939393'], parts: [] },
  { fill: '#d0d0d0', edge: [[918,323],[937,328],[954,341],[970,363],[988,390],[1001,405],[1001,417],[993,425]], lip: [[980,433],[967,436],[947,427],[927,405],[903,383],[877,368],[853,360],[833,359]],
    see: ['916,290 920,340 926,353 928,420 810,370 820,290', '#d0d0d0', '#8f8f8f'], parts: [['#e8e8e8','945,422 955,420 968,436 950,434']] },
  { fill: '#bcbcbc', edge: [], lip: [[927,319],[950,325],[970,343],[993,368],[1003,377],[1017,377],[1023,363],[1030,323],[1038,300]],
    see: ['900,270 1060,270 1060,400 900,400', '#e9e9e9', '#b8b8b8'], parts: [] },
];
const NS = 'http://www.w3.org/2000/svg';
const host = document.getElementById('windows');
const C = [1049, 488];
const push = (p, k) => [C[0] + (p[0] - C[0]) * k, C[1] + (p[1] - C[1]) * k];

// Catmull-Rom spline through the points, as cubic segments
function spline(pts, head) {
  let d = head + pts[0];
  for (let i = 0; i < pts.length - 1; i++) {
    const a = pts[i - 1] || pts[i], b = pts[i], c = pts[i + 1], e = pts[i + 2] || c;
    const p = [b[0] + (c[0] - a[0]) / 6, b[1] + (c[1] - a[1]) / 6];
    const q = [c[0] - (e[0] - b[0]) / 6, c[1] - (e[1] - b[1]) / 6];
    d += `C${p} ${q} ${c}`;
  }
  return d;
}
function add(parent, tag, attrs) {
  const el = document.createElementNS(NS, tag);
  for (const k in attrs) el.setAttribute(k, attrs[k]);
  parent.appendChild(el);
  return el;
}
// Full ellipse, tilted three degrees like the rim
function ring(cx, cy, rx, ry) {
  const t = -3 * Math.PI / 180, x = rx * Math.cos(t), y = rx * Math.sin(t);
  return `M${cx - x},${cy - y}A${rx} ${ry} -3 1 1 ${cx + x},${cy + y}A${rx} ${ry} -3 1 1 ${cx - x},${cy - y}z`;
}
openings.forEach((o, i) => {
  const all = o.edge.concat(o.lip);
  const first = all[0], last = all[all.length - 1];
  const mid = [(first[0] + last[0]) / 2, (first[1] + last[1]) / 2];
  const outline = spline(all, 'M') + 'L' + push(last, 1.1) + 'L' + push(mid, 1.3) + 'L' + push(first, 1.1) + 'z';
  const clip = add(host, 'clipPath', { id: 'open' + i });
  add(clip, 'path', { d: outline });
  const g = add(host, 'g', { 'clip-path': `url(#open${i})`, stroke: '#222' });
  add(g, 'path', { d: outline, fill: o.fill, stroke: 'none' });
  if (o.see) {
    const [area, flange, barrel] = o.see;
    add(add(host, 'clipPath', { id: 'see' + i }), 'path', { d: 'M' + area + 'z' });
    const s = add(g, 'g', { 'clip-path': `url(#see${i})` });
    add(s, 'path', { d: 'M700 250H1400V700H700z', fill: flange });
    add(s, 'path', { d: ring(1050, 515, 280, 183), fill: flange });
    add(s, 'path', { d: ring(1050, 519, 279, 182), fill: barrel });
    add(s, 'path', { d: 'M700 250H1400V700H700z' + ring(1049, 496, 296, 187), fill: '#adadad', 'fill-rule': 'evenodd' });
    add(s, 'path', { d: ring(1049, 499, 294, 187), fill: 'none', stroke: '#666' });
    add(g, 'path', { d: 'M' + area + 'z', fill: 'none' });
  }
  o.parts.forEach(([fill, pts]) => add(g, 'path', { d: 'M' + pts + (fill === 'none' ? '' : 'z'), fill }));
  if (o.lip.length) {
    const lip = o.edge.length ? [o.edge[o.edge.length - 1]].concat(o.lip) : o.lip;
    add(host, 'path', { d: spline(lip, 'M'), fill: 'none', stroke: '#9c1018', 'stroke-width': 2 });
  }
  if (o.edge.length) {
    const ext = [push(o.edge[0], 1.04)].concat(o.edge);
    if (!o.lip.length) ext.push(push(last, 1.04));
    const d = spline(ext, 'M');
    add(host, 'path', { d, fill: 'none', stroke: '#5a0808', 'stroke-width': 9, 'stroke-linecap': 'round' });
    add(host, 'path', { d, fill: 'none', stroke: '#d40909', 'stroke-width': 7, 'stroke-linecap': 'round' });
    add(host, 'path', { d, fill: 'none', stroke: '#f20e0e', 'stroke-width': 4, 'stroke-linecap': 'round' });
  }
});
```
